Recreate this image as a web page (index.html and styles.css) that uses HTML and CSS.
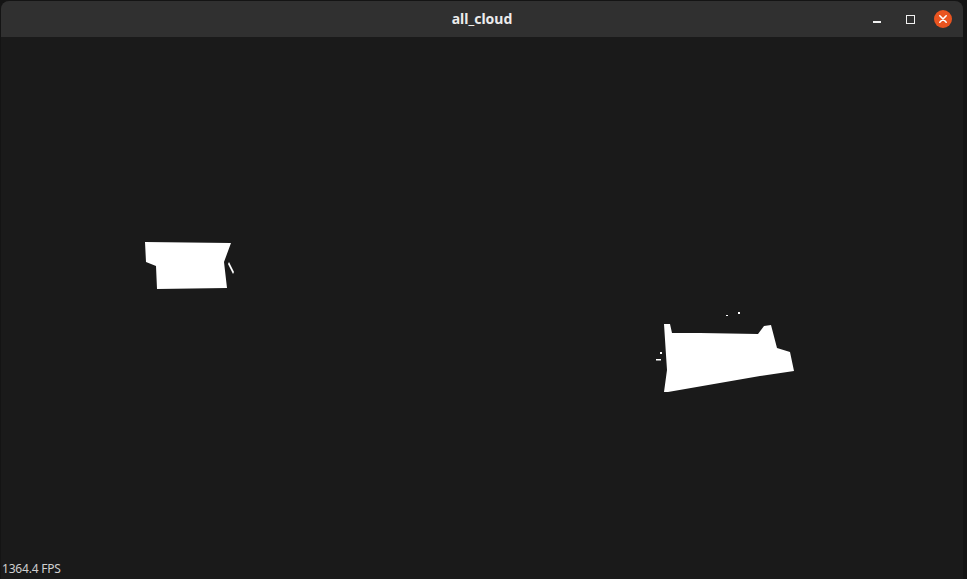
FILE: index.html
```html
<!DOCTYPE html>
<html>
<head>
<meta charset="utf-8">
<link rel="stylesheet" href="styles.css">
<title>all_cloud</title>
</head>
<body>
<div class="window">
  <div class="titlebar">
    <div class="title">all_cloud</div>
    <div class="controls">
      <span class="btn min"><span class="min-line"></span></span>
      <span class="btn max"><span class="max-box"></span></span>
      <span class="btn close">
        <svg width="18" height="18" viewBox="0 0 18 18"><circle cx="9" cy="9" r="9" fill="#e95420"/><path d="M5.8 5.8 L12.2 12.2 M12.2 5.8 L5.8 12.2" stroke="#fff" stroke-width="1.6" stroke-linecap="round"/></svg>
      </span>
    </div>
  </div>
  <div class="canvas">
    <svg class="cloud" width="962" height="542" viewBox="0 37 962 542">
      <polygon fill="#fff" points="145,242 231,243 224,262 227,288 157,289 156,266 146,262"/>
      <polygon fill="#fff" points="229,262 234,272 233,274 228,264"/>
      <polygon fill="#fff" points="664,324 670,324 672,333 700,333 758,334 764,326 771,325 777,348 790,352 794,371 760,376 668,392 664,392 667,370 666,355"/>
      <rect x="738" y="312" width="2" height="2" fill="#fff"/>
      <rect x="726" y="315" width="2" height="1" fill="#fff"/>
      <rect x="656" y="359" width="5" height="1.5" fill="#fff"/>
      <rect x="660" y="352" width="2" height="2" fill="#fff"/>
    </svg>
    <div class="fps">1364.4 FPS</div>
  </div>
</div>
</body>
</html>
```

FILE: styles.css
```css
html, body {
  margin: 0;
  padding: 0;
  width: 967px;
  height: 579px;
  overflow: hidden;
  background: #141414;
}
.window {
  margin: 1px 4px 0 1px;
  height: 578px;
  display: flex;
  flex-direction: column;
  background: #1a1a1a;
  border-radius: 8px 8px 0 0;
  overflow: hidden;
}
.titlebar {
  height: 36px;
  flex: none;
  background: #303030;
  position: relative;
  display: flex;
  align-items: center;
  justify-content: center;
}
.title {
  font-family: "Noto Sans", "DejaVu Sans", sans-serif;
  font-weight: 700;
  font-size: 14px;
  color: #ececec;
  margin-left: 0;
  margin-top: -1px;
}
.controls {
  position: absolute;
  right: 11px;
  top: 9px;
  display: flex;
  gap: 15px;
  align-items: center;
}
.btn {
  width: 18px;
  height: 18px;
  display: flex;
  align-items: center;
  justify-content: center;
}
.min-line {
  width: 8px;
  height: 1.5px;
  background: #f0f0f0;
  margin-top: 6px;
}
.max-box {
  width: 7px;
  height: 7px;
  border: 1.3px solid #f0f0f0;
}
.close svg { display: block; }
.canvas {
  flex: 1;
  position: relative;
  background: #1a1a1a;
}
.cloud {
  position: absolute;
  left: -1px;
  top: 0;
}
.fps {
  position: absolute;
  left: 1px;
  bottom: 2px;
  font-family: "Noto Sans", "DejaVu Sans", sans-serif;
  font-size: 12px;
  color: #d0d0d0;
  letter-spacing: -0.2px;
}
```
